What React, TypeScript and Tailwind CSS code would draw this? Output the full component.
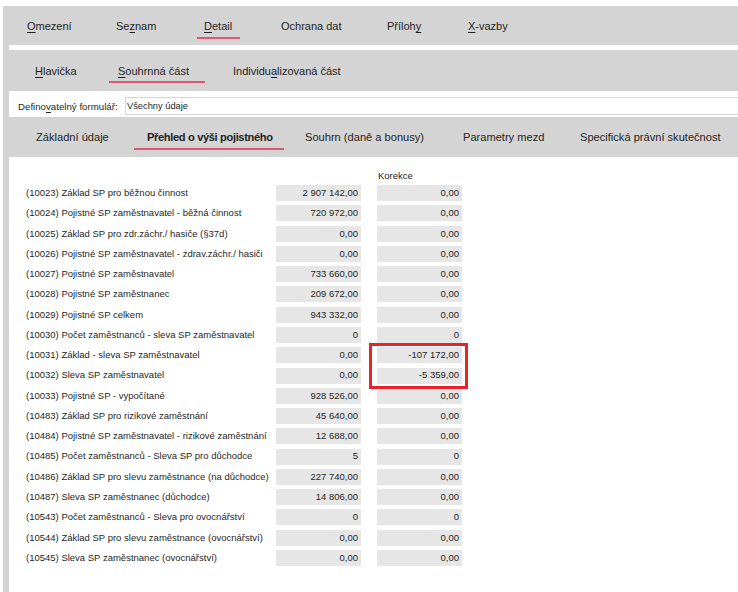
import React from "react";

type Row = { label: string; value: string; korekce: string };

const rows: Row[] = [
  { label: "(10023) Základ SP pro běžnou činnost", value: "2 907 142,00", korekce: "0,00" },
  { label: "(10024) Pojistné SP zaměstnavatel - běžná činnost", value: "720 972,00", korekce: "0,00" },
  { label: "(10025) Základ SP pro zdr.záchr./ hasiče (§37d)", value: "0,00", korekce: "0,00" },
  { label: "(10026) Pojistné SP zaměstnavatel - zdrav.záchr./ hasiči", value: "0,00", korekce: "0,00" },
  { label: "(10027) Pojistné SP zaměstnavatel", value: "733 660,00", korekce: "0,00" },
  { label: "(10028) Pojistné SP zaměstnanec", value: "209 672,00", korekce: "0,00" },
  { label: "(10029) Pojistné SP celkem", value: "943 332,00", korekce: "0,00" },
  { label: "(10030) Počet zaměstnanců - sleva SP zaměstnavatel", value: "0", korekce: "0" },
  { label: "(10031) Základ - sleva SP zaměstnavatel", value: "0,00", korekce: "-107 172,00" },
  { label: "(10032) Sleva SP zaměstnavatel", value: "0,00", korekce: "-5 359,00" },
  { label: "(10033) Pojistné SP - vypočítané", value: "928 526,00", korekce: "0,00" },
  { label: "(10483) Základ SP pro rizikové zaměstnání", value: "45 640,00", korekce: "0,00" },
  { label: "(10484) Pojistné SP zaměstnavatel - rizikové zaměstnání", value: "12 688,00", korekce: "0,00" },
  { label: "(10485) Počet zaměstnanců - Sleva SP pro důchodce", value: "5", korekce: "0" },
  { label: "(10486) Základ SP pro slevu zaměstnance (na důchodce)", value: "227 740,00", korekce: "0,00" },
  { label: "(10487) Sleva SP zaměstnanec (důchodce)", value: "14 806,00", korekce: "0,00" },
  { label: "(10543) Počet zaměstnanců - Sleva pro ovocnářství", value: "0", korekce: "0" },
  { label: "(10544) Základ SP pro slevu zaměstnance (ovocnářství)", value: "0,00", korekce: "0,00" },
  { label: "(10545) Sleva SP zaměstnanec (ovocnářství)", value: "0,00", korekce: "0,00" },
];

function Key({ children }: { children: React.ReactNode }) {
  return <u className="underline decoration-1 underline-offset-2">{children}</u>;
}

function Underline({ className }: { className: string }) {
  return <div className={`h-[2px] bg-[#e2557a] ${className}`} />;
}

export default function App() {
  return (
    <div className="h-screen overflow-hidden bg-white pl-[3px] pt-[6px] font-['Liberation_Sans',Arial,sans-serif] text-[#1f1f1f]">
      <div className="flex h-full flex-col bg-[#d4d4d4]">
        {/* hlavní záložky */}
        <div className="flex h-[39px] pl-[24px] pt-[13px] text-[11px] leading-[14px]">
          <div className="w-[89px]">
            <Key>O</Key>mezení
          </div>
          <div className="w-[88px]">
            Se<Key>z</Key>nam
          </div>
          <div className="flex w-[77px] flex-col">
            <span>
              <Key>D</Key>etail
            </span>
            <Underline className="-ml-[7px] mt-[4px] w-[43px]" />
          </div>
          <div className="w-[106px]">Ochrana dat</div>
          <div className="w-[81px]">
            Příloh<Key>y</Key>
          </div>
          <div>
            <Key>X</Key>-vazby
          </div>
        </div>

        <div className="ml-[6px] h-[5px] bg-white" />

        {/* podzáložky */}
        <div className="flex h-[41px] pl-[32px] pt-[14px] text-[11px] leading-[14px]">
          <div className="w-[83px]">
            <Key>H</Key>lavička
          </div>
          <div className="flex w-[115px] flex-col">
            <span>
              <Key>S</Key>ouhrnná část
            </span>
            <Underline className="-ml-[9px] mt-[3px] w-[96px]" />
          </div>
          <div>
            Individu<Key>a</Key>lizovaná část
          </div>
        </div>

        <div className="ml-[6px] flex h-[26px] items-start bg-white pl-[9px] pt-[6px] text-[9.7px]">
          <span className="flex h-[18px] w-[107px] items-center whitespace-nowrap pt-[2px]">
            Defino<Key>v</Key>atelný formulář:
          </span>
          <div className="flex h-[18px] flex-1 items-center border border-r-0 border-[#d6d6d6] pl-[1px] pt-[1px] text-[9.3px]">
            Všechny údaje
          </div>
        </div>

        {/* záložky formuláře */}
        <div className="flex h-[40px] pl-[33px] pt-[13px] text-[11.1px] leading-[14px]">
          <div className="w-[111px]">Základní údaje</div>
          <div className="flex w-[158px] flex-col">
            <span className="font-bold tracking-[-0.35px]">Přehled o výši pojistného</span>
            <Underline className="-ml-[13px] mt-[4px] w-[150px]" />
          </div>
          <div className="w-[158px]">Souhrn (daně a bonusy)</div>
          <div className="w-[117px]">Parametry mezd</div>
          <div className="whitespace-nowrap">Specifická právní skutečnost</div>
        </div>

        {/* obsah */}
        <div className="relative ml-[6px] flex-1 bg-white pl-[17px] pt-[13px] text-[9.5px]">
          <div className="grid grid-cols-[234px_85px_85px] gap-x-[16px]">
            <div className="col-start-3 h-[12px] pl-[1px] leading-[12px]">Korekce</div>
          </div>
          <div className="mt-[1px] grid grid-cols-[234px_85px_85px] gap-x-[16px]">
            {rows.map((r) => (
              <React.Fragment key={r.label}>
                <div className="flex h-[20.28px] items-center whitespace-nowrap">{r.label}</div>
                <div className="flex h-[20.28px] items-center">
                  <div className="flex h-[16px] w-full items-center justify-end bg-[#e6e6e6] pr-[3px]">
                    {r.value}
                  </div>
                </div>
                <div className="flex h-[20.28px] items-center">
                  <div className="flex h-[16px] w-full items-center justify-end bg-[#e6e6e6] pr-[3px]">
                    {r.korekce}
                  </div>
                </div>
              </React.Fragment>
            ))}
          </div>
          {/* zvýraznění */}
          <div className="absolute left-[360px] top-[186px] h-[46px] w-[99px] border-[3px] border-[#e8232c]" />
        </div>
      </div>
    </div>
  );
}
